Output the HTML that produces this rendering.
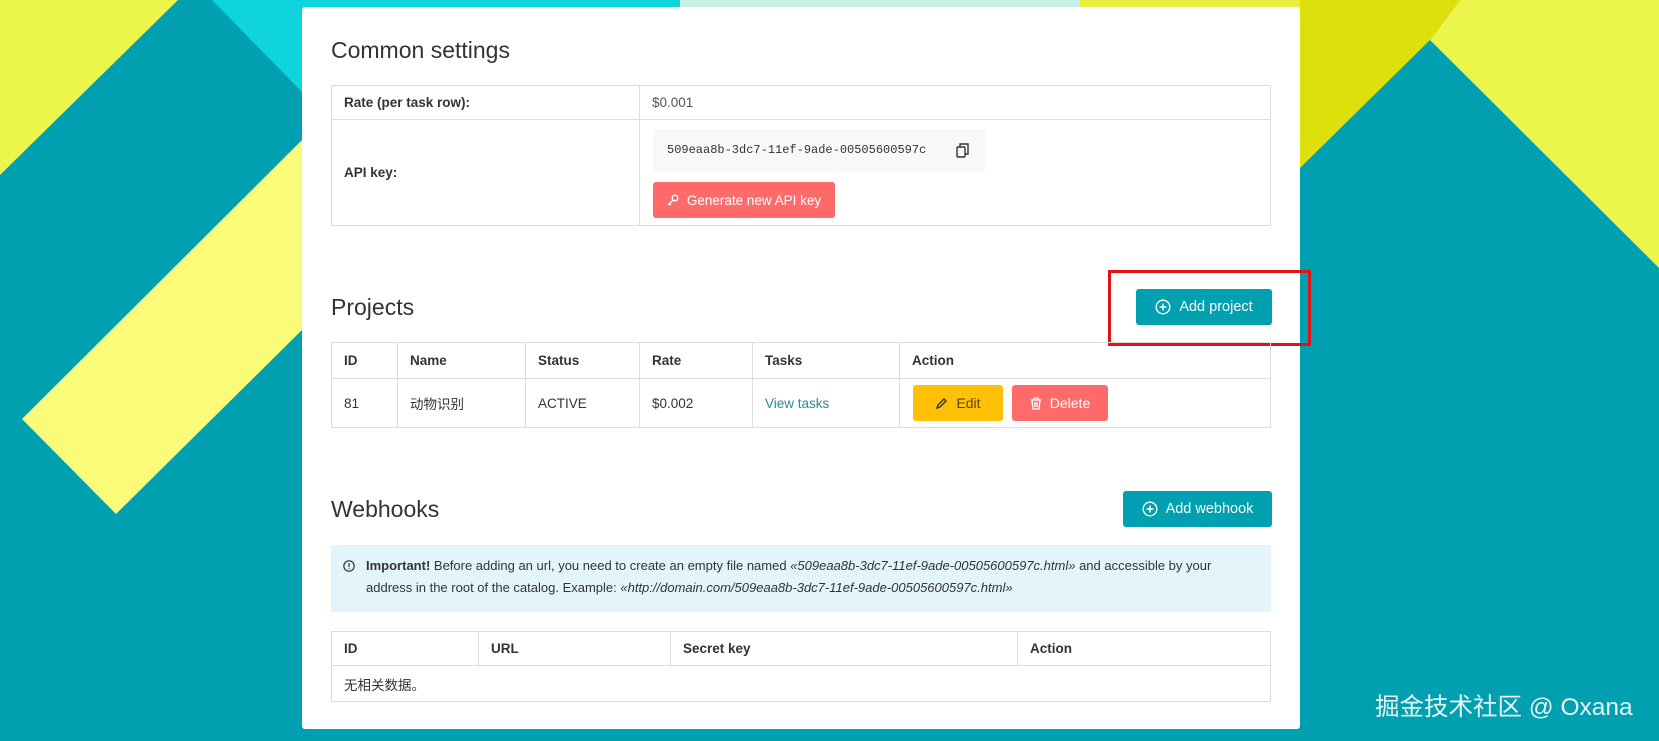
<!DOCTYPE html>
<html><head><meta charset="utf-8"><style>
*{box-sizing:border-box;margin:0;padding:0}
body{width:1659px;height:741px;overflow:hidden;position:relative;background:#00a0b0;font-family:"Liberation Sans","Noto Sans CJK SC",sans-serif;color:#333;font-size:13.5px}
svg.bg{position:absolute;left:0;top:0}
.card{position:absolute;left:302px;top:7px;width:998px;height:722px;background:#fff;border-radius:3px}
.a{position:absolute}
h2{position:absolute;font-weight:400;font-size:23px;color:#333;left:29px}
table{position:absolute;border-collapse:collapse;left:29px;width:940px;table-layout:fixed}
td,th{border:1px solid #dcdcdc;padding:0 12px;text-align:left;font-weight:400;vertical-align:middle}
th{font-weight:600;color:#333}
.btn{position:absolute;border-radius:3px;color:#fff;display:flex;align-items:center;justify-content:center;gap:8px;font-size:14px}
.teal{background:#00a0b0}
</style></head><body>
<svg class="bg" width="1659" height="741">
<polygon points="0,0 178,0 0,175" fill="#ecf54b"/>
<polygon points="212,0 302,0 302,92" fill="#0fd4dc"/>
<polygon points="302,0 680,0 680,10 302,10" fill="#0fd4dc"/>
<polygon points="680,0 1080,0 1080,10 680,10" fill="#c8efe4"/>
<polygon points="1080,0 1300,0 1300,10 1080,10" fill="#e6ee40"/>
<polygon points="22,419 302,140 302,330 116,514" fill="#fbfb7a"/>
<polygon points="1300,0 1460,0 1430,40 1300,168" fill="#dde00a"/>
<polygon points="1460,0 1659,0 1659,268 1430,40" fill="#ecf54b"/>
</svg>
<div class="card">
<h2 style="top:30px">Common settings</h2>
<table style="top:78px">
<col style="width:308px"><col>
<tr style="height:34px"><td style="font-weight:600">Rate (per task row):</td><td style="color:#555">$0.001</td></tr>
<tr style="height:106px"><td style="font-weight:600">API key:</td><td></td></tr>
</table>
<div class="a" style="left:351px;top:122px;width:332px;height:42px;background:#f7f8f9;font-family:'Liberation Mono',monospace;font-size:12px;color:#333;line-height:42px;padding-left:14px">509eaa8b-3dc7-11ef-9ade-00505600597c
<svg style="position:absolute;left:303px;top:14px" width="14" height="15" viewBox="0 0 14 15" fill="none" stroke="#333" stroke-width="1.4"><rect x="1" y="4" width="8" height="10" rx="1"/><path d="M4 4V1h8v10H9"/></svg></div>
<div class="btn" style="left:351px;top:175px;width:182px;height:36px;background:#ff6b6b;font-size:13.5px"><svg width="12" height="12" viewBox="0 0 12 12" fill="none" stroke="#fff" stroke-width="1.3"><circle cx="8" cy="4" r="2.8"/><path d="M6 6L1 11M2.5 9.5l1.5 1.5"/></svg>Generate new API key</div>
<h2 style="top:287px">Projects</h2>
<div class="a" style="left:806px;top:263px;width:203px;height:76px;border:3px solid #e31313"></div>
<div class="btn teal" style="left:834px;top:282px;width:136px;height:36px;font-size:14.5px"><svg width="16" height="16" viewBox="0 0 16 16" fill="none" stroke="#fff" stroke-width="1.4"><circle cx="8" cy="8" r="6.8"/><path d="M8 4.5v7M4.5 8h7"/></svg>Add project</div>
<table style="top:335px">
<col style="width:66px"><col style="width:128px"><col style="width:114px"><col style="width:113px"><col style="width:147px"><col>
<tr style="height:36px"><th>ID</th><th>Name</th><th>Status</th><th>Rate</th><th>Tasks</th><th>Action</th></tr>
<tr style="height:49px"><td>81</td><td>动物识别</td><td>ACTIVE</td><td>$0.002</td><td style="color:#2a8a95">View tasks</td><td></td></tr>
</table>
<div class="btn" style="left:611px;top:378px;width:90px;height:36px;background:#ffc107;color:#5a4500"><svg width="13" height="13" viewBox="0 0 13 13" fill="none" stroke="#333" stroke-width="1.4"><path d="M2 11l1-3 6-6 2 2-6 6z"/></svg>Edit</div>
<div class="btn" style="left:710px;top:378px;width:96px;height:36px;background:#ff6b6b"><svg width="12" height="13" viewBox="0 0 12 13" fill="none" stroke="#fff" stroke-width="1.3"><path d="M1 3h10M4 3V1h4v2M2 3l1 9h6l1-9M5 5v5M7 5v5"/></svg>Delete</div>
<h2 style="top:489px">Webhooks</h2>
<div class="btn teal" style="left:821px;top:484px;width:149px;height:36px;font-size:14.5px"><svg width="16" height="16" viewBox="0 0 16 16" fill="none" stroke="#fff" stroke-width="1.4"><circle cx="8" cy="8" r="6.8"/><path d="M8 4.5v7M4.5 8h7"/></svg>Add webhook</div>
<div class="a" style="left:29px;top:538px;width:940px;height:67px;background:#e3f4fb;padding:10px 14px 0 35px;font-size:13px;line-height:22px;color:#333">
<svg style="position:absolute;left:12px;top:15px" width="12" height="12" viewBox="0 0 12 12" fill="none" stroke="#333" stroke-width="1.2"><circle cx="6" cy="6" r="5.2"/><path d="M6 3v4M6 8.3v.8"/></svg>
<b>Important!</b> Before adding an url, you need to create an empty file named <i>«509eaa8b-3dc7-11ef-9ade-00505600597c.html»</i> and accessible by your address in the root of the catalog. Example: <i>«http://domain.com/509eaa8b-3dc7-11ef-9ade-00505600597c.html»</i></div>
<table style="top:624px">
<col style="width:147px"><col style="width:192px"><col style="width:347px"><col>
<tr style="height:34px"><th>ID</th><th>URL</th><th>Secret key</th><th>Action</th></tr>
<tr style="height:36px"><td colspan="4">无相关数据。</td></tr>
</table>
</div>
<div class="a" style="left:1375px;top:688px;color:#fff;font-size:24.5px;font-family:'Liberation Sans','Noto Sans CJK SC',sans-serif;opacity:.9">掘金技术社区 @ Oxana</div>
</body></html>
